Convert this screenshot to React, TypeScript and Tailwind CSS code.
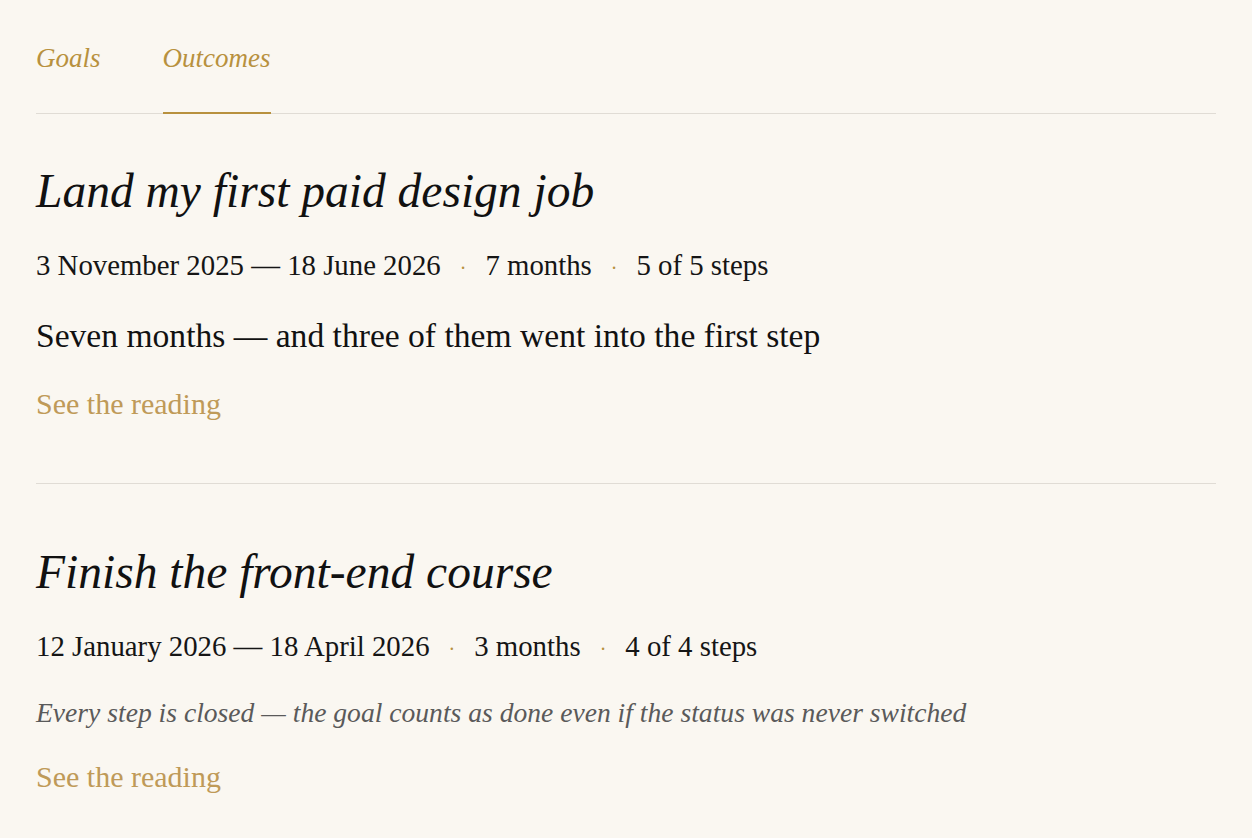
import { useState } from 'react';

type Outcome = {
  title: string;
  from: string;
  to: string;
  span: string;
  steps: string;
  remark: string;
  quiet?: boolean;
};

const outcomes: Outcome[] = [
  {
    title: 'Land my first paid design job',
    from: '3 November 2025',
    to: '18 June 2026',
    span: '7 months',
    steps: '5 of 5 steps',
    remark: 'Seven months — and three of them went into the first step',
  },
  {
    title: 'Finish the front-end course',
    from: '12 January 2026',
    to: '18 April 2026',
    span: '3 months',
    steps: '4 of 4 steps',
    remark: 'Every step is closed — the goal counts as done even if the status was never switched',
    quiet: true,
  },
];

const Dot = () => <span className="mx-[19px] text-[#b8913e] text-[20px]">·</span>;

const OutcomeCard = ({ item, first }: { item: Outcome; first: boolean }) => (
  <article className={`${first ? 'pt-[49px]' : 'pt-[60px] border-t border-[#e0dcd5]'} pb-[59px]`}>
    <h2 className="italic text-[47.5px] leading-[56px] text-[#111] font-normal">{item.title}</h2>
    <p className="mt-[26px] text-[28.8px] leading-[40px] text-[#151515]">
      {item.from} — {item.to}
      <Dot />
      {item.span}
      <Dot />
      {item.steps}
    </p>
    {item.quiet ? (
      <p className="mt-[24px] italic text-[27.6px] leading-[40px] text-[#5a5a5a]">{item.remark}</p>
    ) : (
      <p className="mt-[28px] text-[33.6px] leading-[40px] text-[#111]">{item.remark}</p>
    )}
    <a href="#" className={`block ${item.quiet ? 'mt-[24px]' : 'mt-[28px]'} text-[30px] leading-[40px] text-[#bf9a58]`}>
      See the reading
    </a>
  </article>
);

export default function App() {
  const [tab, setTab] = useState<'goals' | 'outcomes'>('outcomes');

  return (
    <div className="min-h-screen bg-[#faf7f1] px-[36px] pt-[36px] font-['Liberation_Serif',serif]">
      <nav className="flex gap-[62px] border-b border-[#e0dcd5]">
        {(['goals', 'outcomes'] as const).map((t) => (
          <button
            key={t}
            onClick={() => setTab(t)}
            className={`-mb-px pb-[32px] italic text-[27px] leading-[44px] text-[#b8913e] border-b-2 ${
              tab === t ? 'border-[#b8913e]' : 'border-transparent'
            }`}
          >
            {t === 'goals' ? 'Goals' : 'Outcomes'}
          </button>
        ))}
      </nav>
      {outcomes.map((item, i) => (
        <OutcomeCard key={item.title} item={item} first={i === 0} />
      ))}
    </div>
  );
}
